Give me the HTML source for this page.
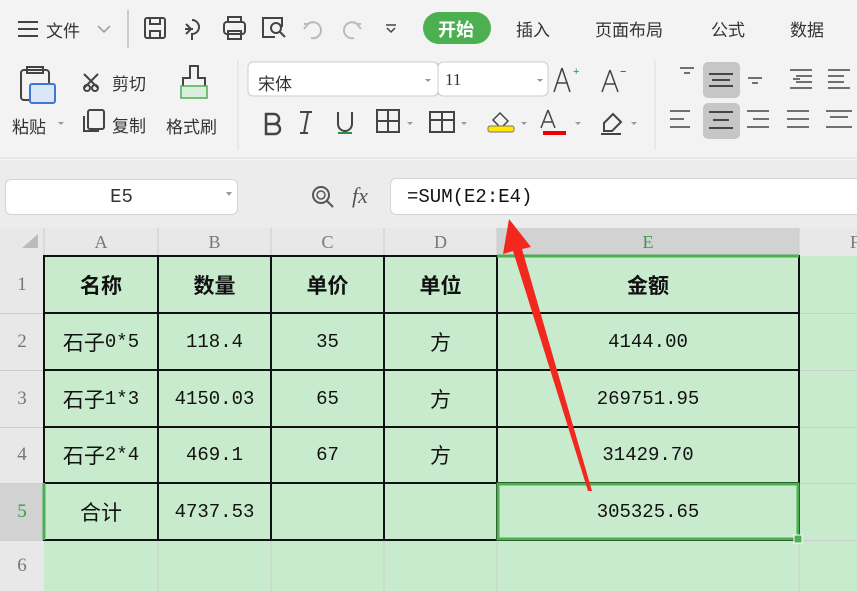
<!DOCTYPE html>
<html><head><meta charset="utf-8"><style>
*{margin:0;padding:0;box-sizing:border-box}
body{width:857px;height:591px;overflow:hidden;background:#f3f3f3;font-family:"Liberation Sans","Noto Sans CJK SC",sans-serif;position:relative;color:#333}
.a{position:absolute;white-space:nowrap}
.t{font-size:17px;color:#333}
.c{position:absolute;display:flex;align-items:center;justify-content:center;font-size:21px;color:#111}
.m{font-family:"Liberation Mono","Noto Sans CJK SC",monospace;font-size:19px}
.h{font-weight:bold}
.hd{position:absolute;top:228px;height:28px;display:flex;align-items:center;justify-content:center;font-family:"Liberation Serif",serif;font-size:18px;color:#777}
.rh{position:absolute;left:0;width:44px;display:flex;align-items:center;justify-content:center;font-family:"Liberation Serif",serif;font-size:19px;color:#777}
</style></head><body>
<svg class="a" style="left:0;top:0" width="857" height="160">
 <g stroke="#444" stroke-width="2" fill="none">
  <path d="M18 22h20M18 29h20M18 36h20"/>
  <path d="M98 26l6 6 6-6" stroke="#999" stroke-width="1.5"/>
  <rect x="145" y="18" width="20" height="20" rx="2"/><path d="M150 18v6h10v-6M150 38v-7h10v7"/>
  <path d="M186 24l5 5-5 5M185 29h8M192 20a7 7 0 1 1 0 14v6"/>
  <rect x="224" y="22" width="21" height="12" rx="3"/><path d="M228 22v-5h13v5M228 31h13v8h-13z"/>
  <path d="M275 37h-12v-19h19v9"/><circle cx="276" cy="28" r="5"/><path d="M280 32l5 5"/>
  <path d="M308 24l-4 5M304 24h4a8 8 0 1 1 3 14" stroke="#bbb"/>
  <path d="M357 24l4 5M361 24h-4a8 8 0 1 0-3 14" stroke="#bbb"/>
  <path d="M386 25h10M387 28l4 4 4-4" stroke-width="1.5"/>
 </g>
 <line x1="128" y1="10" x2="128" y2="48" stroke="#ccc" stroke-width="2"/>
 <rect x="423" y="12" width="68" height="32" rx="16" fill="#4caf50"/>
 <g fill="none" stroke="#444" stroke-width="2">
  <rect x="21" y="70" width="28" height="30" rx="3"/><rect x="27" y="67" width="16" height="6"/>
  <path d="M84 74l14 14M98 74l-14 14"/><circle cx="87" cy="88" r="3"/><circle cx="95" cy="88" r="3"/>
  <rect x="88" y="110" width="16" height="19" rx="2"/><path d="M84 116v15h15"/>
  <path d="M190 66h8v12h7v9h-22v-9h7z"/>
  <path d="M266 114h8a5 5 0 0 1 0 10h-8zM266 124h9a5 5 0 0 1 0 10h-9zM266 113v21" stroke-width="2.5"/>
  <path d="M304 133l4-21M300 112h12M300 133h8"/>
  <path d="M338 112v12a7 7 0 0 0 14 0v-12"/>
  <rect x="377" y="110" width="22" height="22"/><path d="M388 110v22M377 121h22"/>
  <rect x="430" y="112" width="24" height="20"/><path d="M430 120h24M442 112v20"/>
  <path d="M604 123l9-9 8 8-9 9h-8z"/><path d="M601 134h20"/>
  <path d="M680 68h14M684 73h6" stroke-width="1.5"/>
  <path d="M748 78h14M752 83h6" stroke-width="1.5"/>
  <path d="M790 70h22M796 76h16M796 82h16M790 88h22M800 79h-7" stroke-width="1.5"/>
  <path d="M828 70h22M828 76h16M828 82h16M828 88h22" stroke-width="1.5"/>
  <path d="M670 111h20M670 119h14M670 127h20" stroke-width="1.5"/>
  <path d="M747 111h22M753 119h16M747 127h22" stroke-width="1.5"/>
  <path d="M787 111h22M787 119h22M787 127h22" stroke-width="1.5"/>
  <path d="M826 111h26M826 127h26M830 117h18" stroke-width="1.5"/>
  <path d="M562 68l-8 24M562 68l8 24M557 83h11" stroke-width="1.5"/>
  <path d="M610 70l-8 22M610 70l8 22M605 84h10" stroke-width="1.5"/>
  <path d="M548 110l-7 18M548 110l7 18M544 122h8" stroke-width="1.5"/>
  <path d="M493 120l7-7 8 8-7 7z" stroke-width="1.5"/>
 </g>
 <rect x="30" y="84" width="25" height="19" rx="2" fill="#dbe7f7" stroke="#3d78d8" stroke-width="2"/>
 <rect x="181" y="86" width="26" height="12" fill="#dbeedd" stroke="#4caf50" stroke-width="1.5"/>
 <rect x="543" y="131" width="23" height="4" fill="#e00"/>
 <rect x="488" y="126" width="26" height="6" rx="2" fill="#ffe500" stroke="#777"/>
 <rect x="703" y="62" width="37" height="36" rx="5" fill="#c6c6c6"/>
 <rect x="703" y="103" width="37" height="36" rx="5" fill="#c6c6c6"/>
 <path d="M709 74h24M712 80h18M709 86h24M709 112h24M713 120h16M709 128h24" stroke="#333" stroke-width="1.8"/>
 <text x="573" y="75" font-size="11" fill="#2a8f4a">+</text><text x="620" y="75" font-size="11" fill="#333">−</text>
 <rect x="338" y="132" width="14" height="2" fill="#2a8f4a"/>
 <line x1="238" y1="60" x2="238" y2="150" stroke="#ddd"/>
 <line x1="655" y1="60" x2="655" y2="150" stroke="#ddd"/>
 <rect x="248" y="62" width="190" height="34" rx="5" fill="#fff" stroke="#ccc"/>
 <line x1="438" y1="63" x2="438" y2="95" stroke="#ccc"/>
 <rect x="438" y="62" width="110" height="34" rx="5" fill="#fff" stroke="#ccc"/>
 <path d="M425 79l3 3 3-3M537 79l3 3 3-3M58 122l3 3 3-3M407 122l3 3 3-3M461 122l3 3 3-3M521 122l3 3 3-3M575 122l3 3 3-3M631 122l3 3 3-3" fill="#999"/>
 <line x1="0" y1="158" x2="857" y2="158" stroke="#ddd"/>
</svg>
<div class="a t" style="left:46px;top:17px">文件</div>
<div class="a" style="left:438px;top:16px;font-size:18px;color:#fff;font-weight:bold">开始</div>
<div class="a t" style="left:516px;top:16px">插入</div>
<div class="a t" style="left:595px;top:16px">页面布局</div>
<div class="a t" style="left:711px;top:16px">公式</div>
<div class="a t" style="left:790px;top:16px">数据</div>
<div class="a t" style="left:112px;top:70px">剪切</div>
<div class="a t" style="left:112px;top:112px">复制</div>
<div class="a t" style="left:12px;top:113px">粘贴</div>
<div class="a t" style="left:166px;top:113px">格式刷</div>
<div class="a t" style="left:258px;top:70px">宋体</div>
<div class="a t" style="left:445px;top:70px;font-family:'Liberation Serif',serif">11</div>
<div class="a" style="left:0;top:160px;width:857px;height:68px;background:#ececec"></div>
<div class="a" style="left:5px;top:179px;width:233px;height:36px;background:#fff;border:1px solid #d4d4d4;border-radius:6px;text-align:center;line-height:34px;font-family:'Liberation Mono',monospace;font-size:19px;color:#333">E5</div>
<div class="a" style="left:226px;top:192px;border:3px solid transparent;border-top:4px solid #999"></div>
<svg class="a" style="left:308px;top:182px" width="30" height="30"><circle cx="13" cy="13" r="8" fill="none" stroke="#555" stroke-width="2"/><circle cx="13" cy="13" r="4" fill="none" stroke="#555" stroke-width="1.5"/><path d="M19 19l6 6" stroke="#555" stroke-width="2"/></svg>
<div class="a" style="left:352px;top:183px;font-family:'Liberation Serif',serif;font-style:italic;font-size:22px;color:#555">fx</div>
<div class="a" style="left:390px;top:178px;width:480px;height:37px;background:#fff;border:1px solid #d4d4d4;border-radius:6px;padding-left:16px;line-height:36px;font-family:'Liberation Mono',monospace;font-size:19px;color:#111">=SUM(E2:E4)</div>
<div class="a" style="left:0;top:228px;width:857px;height:28px;background:#e8e8e8"></div>
<div class="a" style="left:0;top:256px;width:44px;height:335px;background:#e8e8e8"></div>
<div class="a" style="left:497px;top:228px;width:302px;height:28px;background:#d2d2d2"></div>
<div class="a" style="left:0;top:483px;width:44px;height:57px;background:#d2d2d2"></div>
<div class="a" style="left:44px;top:256px;width:813px;height:335px;background:#c9ebcd"></div>
<svg class="a" style="left:0;top:228px" width="857" height="363">
 <path d="M22 20l16-14v14z" fill="#bbb"/>
 <g stroke="#ccc" stroke-width="1"><path d="M44 0v28M158 0v28M271 0v28M384 0v28M497 0v28M799 0v28M0 85.5h44M0 142.5h44M0 199.5h44M0 255.5h44M0 312.5h44M158 312v51M271 312v51M384 312v51M497 312v51M799 312v51M799 85.5h58M799 142.5h58M799 199.5h58M799 255.5h58M799 312.5h58"/></g>
 <g stroke="#111" stroke-width="2" fill="none">
  <rect x="44" y="28" width="755" height="284"/>
  <path d="M158 28v284M271 28v284M384 28v284M497 28v284M44 85h755M44 142h755M44 199h755M44 255h755"/>
 </g>
 <line x1="497" y1="28" x2="799" y2="28" stroke="#4caf50" stroke-width="3"/>
 <line x1="44" y1="255" x2="44" y2="312" stroke="#4caf50" stroke-width="3"/>
 <rect x="498" y="256" width="300" height="55" fill="none" stroke="#4caf50" stroke-width="3"/>
 <rect x="794" y="307" width="8" height="8" fill="#4caf50" stroke="#fff"/>
</svg>
<div class="hd" style="left:44px;width:114px">A</div>
<div class="hd" style="left:158px;width:113px">B</div>
<div class="hd" style="left:271px;width:113px">C</div>
<div class="hd" style="left:384px;width:113px">D</div>
<div class="hd" style="left:497px;width:302px;color:#3a9a4a">E</div>
<div class="hd" style="left:845px;width:20px">F</div>
<div class="rh" style="top:256px;height:57px">1</div>
<div class="rh" style="top:313px;height:57px">2</div>
<div class="rh" style="top:370px;height:57px">3</div>
<div class="rh" style="top:427px;height:56px">4</div>
<div class="rh" style="top:483px;height:57px;color:#3a9a4a">5</div>
<div class="rh" style="top:540px;height:51px">6</div>
<div class="c h" style="left:44px;top:256px;width:114px;height:57px">名称</div>
<div class="c h" style="left:158px;top:256px;width:113px;height:57px">数量</div>
<div class="c h" style="left:271px;top:256px;width:113px;height:57px">单价</div>
<div class="c h" style="left:384px;top:256px;width:113px;height:57px">单位</div>
<div class="c h" style="left:497px;top:256px;width:302px;height:57px">金额</div>
<div class="c" style="left:44px;top:313px;width:114px;height:57px">石子<span class="m">0*5</span></div>
<div class="c m" style="left:158px;top:313px;width:113px;height:57px">118.4</div>
<div class="c m" style="left:271px;top:313px;width:113px;height:57px">35</div>
<div class="c" style="left:384px;top:313px;width:113px;height:57px">方</div>
<div class="c m" style="left:497px;top:313px;width:302px;height:57px">4144.00</div>
<div class="c" style="left:44px;top:370px;width:114px;height:57px">石子<span class="m">1*3</span></div>
<div class="c m" style="left:158px;top:370px;width:113px;height:57px">4150.03</div>
<div class="c m" style="left:271px;top:370px;width:113px;height:57px">65</div>
<div class="c" style="left:384px;top:370px;width:113px;height:57px">方</div>
<div class="c m" style="left:497px;top:370px;width:302px;height:57px">269751.95</div>
<div class="c" style="left:44px;top:427px;width:114px;height:56px">石子<span class="m">2*4</span></div>
<div class="c m" style="left:158px;top:427px;width:113px;height:56px">469.1</div>
<div class="c m" style="left:271px;top:427px;width:113px;height:56px">67</div>
<div class="c" style="left:384px;top:427px;width:113px;height:56px">方</div>
<div class="c m" style="left:497px;top:427px;width:302px;height:56px">31429.70</div>
<div class="c" style="left:44px;top:483px;width:114px;height:57px">合计</div>
<div class="c m" style="left:158px;top:483px;width:113px;height:57px">4737.53</div>
<div class="c m" style="left:497px;top:483px;width:302px;height:57px">305325.65</div>
<svg class="a" style="left:0;top:0" width="857" height="591">
 <path d="M509 219L531 247L522 249L592 491L588 491L513 251L503 254Z" fill="#f0281e"/>
</svg>
</body></html>
